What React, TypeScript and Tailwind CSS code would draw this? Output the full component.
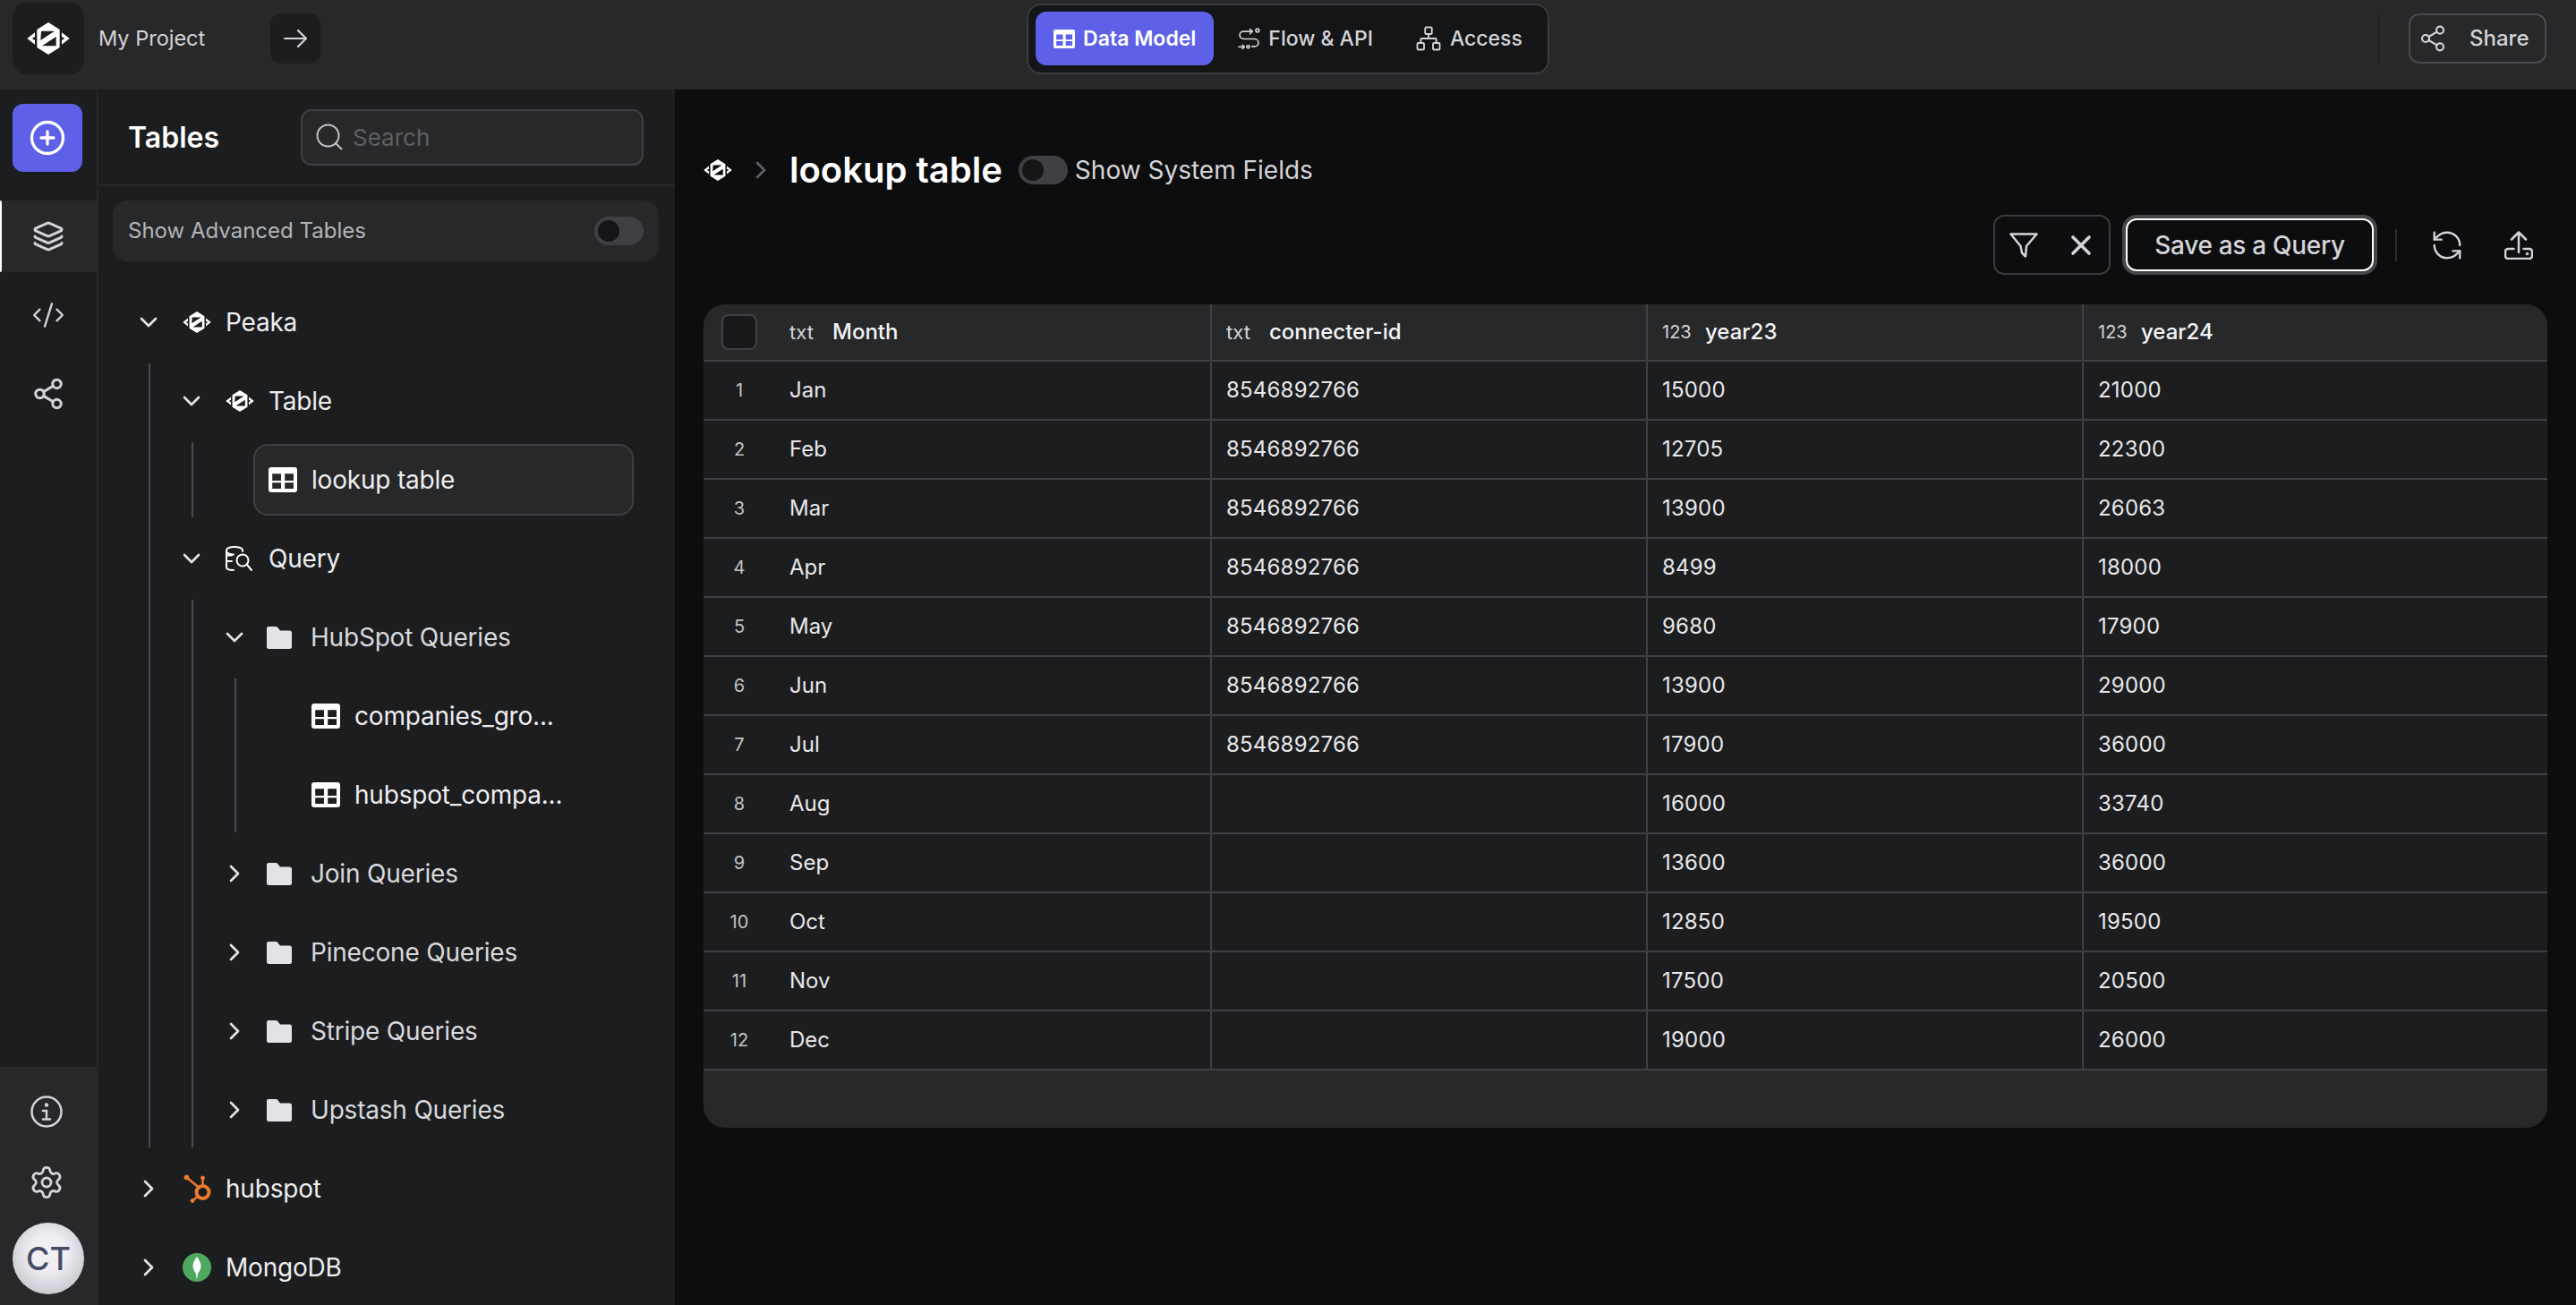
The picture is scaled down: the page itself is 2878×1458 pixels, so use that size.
import React from 'react';
import { ChevronDown, ChevronRight, CirclePlus, CodeXml, Layers, Network, RefreshCcw, Search, Settings, Share2, X } from 'lucide-react';

function PeakaLogo({ className }: { className?: string }) {
  return (
    <svg viewBox="0 0 142 108" className={className} fill="currentColor">
      <path
        fillRule="evenodd"
        d="M33 24 71 0l38 24v60l-38 24-38-24ZM47 29h45L45 60ZM97 48v31H50Z"
      />
      <path d="M0 54 26 34v14l-10 6 10 6v14ZM142 54l-26-20v14l10 6-10 6v14Z" />
    </svg>
  );
}

function TableIcon({ className }: { className?: string }) {
  return (
    <svg viewBox="0 0 32 28" className={className} fill="currentColor">
      <path
        fillRule="evenodd"
        d="M3 0h26a3 3 0 0 1 3 3v22a3 3 0 0 1-3 3H3a3 3 0 0 1-3-3V3a3 3 0 0 1 3-3ZM4.200 7.200V15H14V7.200ZM18.200 7.200V15H28V7.200ZM4.200 17.200V24H14v-6.800ZM18.200 17.200V24H28v-6.800Z"
      />
    </svg>
  );
}

function FolderIcon() {
  return (
    <svg viewBox="0 0 28 25" className="h-[25px] w-[28px] text-[#e2e3e7]" fill="currentColor">
      <path d="M2 0h8.500a2 2 0 0 1 1.500.7L15 4.500h10.500A2.500 2.500 0 0 1 28 7v15.500a2.500 2.500 0 0 1-2.500 2.500h-23A2.500 2.500 0 0 1 0 22.500V2a2 2 0 0 1 2-2Z" />
    </svg>
  );
}

function QueryIcon() {
  return (
    <svg viewBox="0 0 30 28" className="h-[28px] w-[30px] text-white" fill="none" stroke="currentColor" strokeWidth="2" strokeLinecap="round">
      <path d="M19 6V4.500C19 2.500 15 1 10 1S1 2.500 1 4.500v19C1 25.500 4 27 9 27" />
      <path d="M1 6c0 2 4 3.500 8 3.500M1 17h6M1 10.500h6" />
      <circle cx="19" cy="16" r="6.500" />
      <path d="m24 21 5 6" />
    </svg>
  );
}

function FlowIcon() {
  return (
    <svg viewBox="0 0 24 24" className="h-[25px] w-[25px] text-[#d4d4d8]" fill="none" stroke="currentColor" strokeWidth="1.600" strokeLinecap="round" strokeLinejoin="round">
      <circle cx="21" cy="2.800" r="1.800" />
      <path d="M15 4H6a4 4 0 0 0 0 8h12a4 4 0 0 1 0 8h-3" />
      <path d="m13 1.500 2.500 2.500L13 6.500" />
      <path d="M1 20.500h6M5 18.500l2 2-2 2" />
      <circle cx="11" cy="20.500" r="1.500" />
    </svg>
  );
}

function InfoIcon() {
  return (
    <svg viewBox="0 0 36 36" className="h-[36px] w-[36px] text-[#d4d4d8]" fill="none" stroke="currentColor" strokeWidth="2.500" strokeLinecap="round">
      <circle cx="18" cy="18" r="16.500" />
      <path d="M14 17h4v9M14 26.500h8" />
      <circle cx="18" cy="10.500" r="1" fill="currentColor" />
    </svg>
  );
}

function HubspotIcon() {
  return (
    <svg viewBox="0 0 32 32" className="h-[32px] w-[32px] text-[#ee7a30]" fill="currentColor" stroke="currentColor">
      <circle cx="22.500" cy="20" r="7" fill="none" strokeWidth="4" />
      <circle cx="4.500" cy="3.500" r="2.500" strokeWidth="1" />
      <circle cx="22.500" cy="4" r="2" strokeWidth="1" />
      <circle cx="11" cy="29.500" r="2" strokeWidth="1" />
      <path d="m4.500 3.500 14 11.500M22.500 4v10M11 29.500l6-5" fill="none" strokeWidth="2.500" />
    </svg>
  );
}

function MongoIcon() {
  return (
    <svg viewBox="0 0 32 32" className="h-[32px] w-[32px]">
      <circle cx="16" cy="16" r="16" fill="#4fa860" />
      <path d="M16 4c3 4 4.500 7.500 4.500 10.500S18.500 21 17 23l-.5 5h-1l-.5-5c-1.500-2-3.500-5.500-3.500-8.500S13 8 16 4Z" fill="#fff" />
    </svg>
  );
}

function ToggleOff() {
  return (
    <div className="flex h-[32px] w-[55px] shrink-0 items-center rounded-full bg-[#3f4043] pl-[4px]">
      <div className="h-[24px] w-[24px] rounded-full bg-[#141517]" />
    </div>
  );
}

interface TreeRowProps {
  open?: boolean;
  icon: React.ReactNode;
  label: string;
  gap?: string;
}

function TreeRow({ open, icon, label, gap = 'gap-[16px]' }: TreeRowProps) {
  return (
    <div className="flex h-[88px] items-center">
      <div className="flex w-[54px] shrink-0 text-[#e4e4e7]">
        {open ? <ChevronDown size={32} strokeWidth={2} /> : <ChevronRight size={32} strokeWidth={2} />}
      </div>
      <div className={`flex items-center ${gap}`}>
        {icon}
        <span className="text-[28px] leading-none tracking-[-0.2px] text-[#eeeef0]">{label}</span>
      </div>
    </div>
  );
}

function FolderRow({ open, label }: { open?: boolean; label: string }) {
  return (
    <div className="flex h-[88px] items-center">
      <div className="flex w-[52px] shrink-0 text-[#e4e4e7]">
        {open ? <ChevronDown size={32} strokeWidth={2} /> : <ChevronRight size={32} strokeWidth={2} />}
      </div>
      <div className="flex items-center gap-[21px]">
        <FolderIcon />
        <span className="text-[28px] leading-none tracking-[-0.2px] text-[#d8d9dc]">{label}</span>
      </div>
    </div>
  );
}

function Guide({ className, children }: { className: string; children: React.ReactNode }) {
  return (
    <div className={`my-[2px] flex flex-col border-l-2 border-[#4a4b4e] ${className}`}>
      <div className="-my-[2px]">{children}</div>
    </div>
  );
}

function QueryLeaf({ label }: { label: string }) {
  return (
    <div className="flex h-[88px] items-center gap-[16px] pl-[84px]">
      <TableIcon className="h-[28px] w-[32px] text-white" />
      <span className="text-[28px] leading-none tracking-[-0.2px] text-[#eeeef0]">{label}</span>
    </div>
  );
}

function Rail() {
  return (
    <div className="flex w-[110px] shrink-0 flex-col justify-between border-r-2 border-[#27282a] bg-[#1c1d1f]">
      <div>
        <div className="ml-[14px] mt-[16px] flex h-[76px] w-[78px] items-center justify-center rounded-xl bg-[#5e61e8] text-white">
          <CirclePlus size={42} strokeWidth={1.900} />
        </div>
        <div className="mt-[32px] flex flex-col gap-[8px]">
          <div className="relative flex h-[80px] items-center justify-center bg-[#27282a] text-[#d4d4d8]">
            <div className="absolute left-0 top-0 h-full w-[2px] rounded-r bg-white" />
            <Layers size={36} strokeWidth={2} />
          </div>
          <div className="flex h-[80px] items-center justify-center text-[#d4d4d8]">
            <CodeXml size={38} strokeWidth={1.500} />
          </div>
          <div className="flex h-[80px] items-center justify-center text-[#d4d4d8]">
            <Share2 size={38} strokeWidth={1.900} />
          </div>
        </div>
      </div>
      <div className="flex h-[266px] flex-col bg-[#27282a] pl-[14px]">
        <div className="ml-[20px] mt-[32px] h-[36px] w-[36px]">
          <InfoIcon />
        </div>
        <div className="ml-[18px] mt-[41px] text-[#d4d4d8]">
          <Settings size={40} strokeWidth={1.700} />
        </div>
        <div className="mt-[25px] flex h-[80px] w-[80px] items-center justify-center rounded-full bg-[radial-gradient(circle_at_50%_42%,#f0f0f4_30%,#b4b5c0_100%)] text-[36px] font-medium text-[#464a66]">
          CT
        </div>
      </div>
    </div>
  );
}

function Sidebar() {
  return (
    <div className="flex w-[644px] shrink-0 flex-col overflow-hidden bg-[#1c1d1f]">
      <div className="flex h-[108px] shrink-0 items-center justify-between border-b-2 border-[#27282a] pl-[33px] pr-[35px]">
        <span className="pt-[2px] text-[32px] font-semibold text-white">Tables</span>
        <div className="flex h-[63px] w-[383px] items-center gap-[8px] rounded-xl border-2 border-[#3f4043] bg-[#27282a] pl-[12px]">
          <Search size={36} strokeWidth={1.300} className="text-[#c4c4c8]" />
          <span className="pt-[1px] text-[26px] text-[#5f6064]">Search</span>
        </div>
      </div>
      <div className="ml-[16px] mr-[18px] mt-[16px] flex h-[68px] shrink-0 items-center justify-between rounded-2xl bg-[#27282a] pl-[17px] pr-[17px]">
        <span className="text-[24px] text-[#b4b5b8]">Show Advanced Tables</span>
        <ToggleOff />
      </div>
      <div className="mt-[24px] pl-[40px]">
        <TreeRow open icon={<PeakaLogo className="h-[24px] w-[32px] text-white" />} label="Peaka" />
        <Guide className="ml-[16px]">
          <div className="pl-[30px]">
            <TreeRow open icon={<PeakaLogo className="h-[24px] w-[32px] text-white" />} label="Table" />
            <Guide className="ml-[16px]">
              <div className="flex h-[88px] items-center pl-[67px]">
                <div className="flex h-[80px] w-[425px] items-center gap-[16px] rounded-2xl border-2 border-[#3f4043] bg-[#27282a] pl-[15px]">
                  <TableIcon className="h-[28px] w-[32px] text-white" />
                  <span className="text-[28px] leading-none tracking-[-0.2px] text-[#eeeef0]">lookup table</span>
                </div>
              </div>
            </Guide>
            <TreeRow open icon={<QueryIcon />} label="Query" gap="gap-[18px]" />
            <Guide className="ml-[16px]">
              <div className="pl-[30px]">
                <FolderRow open label="HubSpot Queries" />
                <Guide className="ml-[16px]">
                  <QueryLeaf label="companies_gro..." />
                  <QueryLeaf label="hubspot_compa..." />
                </Guide>
                <FolderRow label="Join Queries" />
                <FolderRow label="Pinecone Queries" />
                <FolderRow label="Stripe Queries" />
                <FolderRow label="Upstash Queries" />
              </div>
            </Guide>
          </div>
        </Guide>
        <TreeRow icon={<HubspotIcon />} label="hubspot" />
        <TreeRow icon={<MongoIcon />} label="MongoDB" />
      </div>
    </div>
  );
}

const rows: [string, string, string, string][] = [
  ['Jan', '8546892766', '15000', '21000'],
  ['Feb', '8546892766', '12705', '22300'],
  ['Mar', '8546892766', '13900', '26063'],
  ['Apr', '8546892766', '8499', '18000'],
  ['May', '8546892766', '9680', '17900'],
  ['Jun', '8546892766', '13900', '29000'],
  ['Jul', '8546892766', '17900', '36000'],
  ['Aug', '', '16000', '33740'],
  ['Sep', '', '13600', '36000'],
  ['Oct', '', '12850', '19500'],
  ['Nov', '', '17500', '20500'],
  ['Dec', '', '19000', '26000'],
];

function HeadCell({ type, label, last }: { type: string; label: string; last?: boolean }) {
  return (
    <div className={`flex items-center pl-[16px] ${last ? '' : 'border-r-2 border-[#3f4043]'}`}>
      <span className={`w-[48px] shrink-0 text-[#d4d4d8] ${type === 'txt' ? 'text-[22px]' : 'text-[20px]'}`}>{type}</span>
      <span className="text-[24px] font-medium text-[#f4f4f5]">{label}</span>
    </div>
  );
}

function DataTable() {
  const cell = 'flex items-center pl-[16px] text-[24px] text-[#e8e8ea]';
  return (
    <div className="mt-[33px] overflow-hidden rounded-3xl bg-[#27282a]">
      <div className="grid h-[64px] grid-cols-[80px_488px_487px_487px_1fr] border-b-2 border-[#3f4043]">
        <div className="flex items-center justify-center">
          <div className="h-[40px] w-[40px] rounded-lg border-2 border-[#3f4043] bg-[#17181a]" />
        </div>
        <HeadCell type="txt" label="Month" />
        <HeadCell type="txt" label="connecter-id" />
        <HeadCell type="123" label="year23" />
        <HeadCell type="123" label="year24" last />
      </div>
      {rows.map((row, i) => (
        <div key={row[0]} className="grid h-[66px] grid-cols-[80px_488px_487px_487px_1fr] border-b-2 border-[#3f4043] bg-[#1c1d1f]">
          <div className="flex items-center justify-center text-[20px] text-[#c4c4c8]">{i + 1}</div>
          <div className={`${cell} border-r-2 border-[#3f4043]`}>{row[0]}</div>
          <div className={`${cell} border-r-2 border-[#3f4043] tracking-[0.2px]`}>{row[1]}</div>
          <div className={`${cell} border-r-2 border-[#3f4043] tracking-[0.2px]`}>{row[2]}</div>
          <div className={`${cell} tracking-[0.2px]`}>{row[3]}</div>
        </div>
      ))}
      <div className="h-[64px]" />
    </div>
  );
}

function Main() {
  return (
    <div className="min-w-0 flex-1 bg-[#0c0d0e] px-[32px] pt-[66px]">
      <div className="flex h-[48px] items-center">
        <PeakaLogo className="h-[24px] w-[32px] text-white" />
        <ChevronRight size={32} strokeWidth={2} className="ml-[16px] text-[#5f6064]" />
        <h1 className="ml-[16px] text-[40px] font-semibold text-white">lookup table</h1>
        <div className="ml-[18px]">
          <ToggleOff />
        </div>
        <span className="ml-[8px] text-[28px] text-[#d4d4d8]">Show System Fields</span>
      </div>
      <div className="mt-[26px] flex h-[67px] items-center justify-end pr-[16px] text-[#d4d4d8]">
        <div className="flex h-[67px] w-[131px] items-center rounded-xl border-2 border-[#3a3b3e] pl-[16px]">
          <svg viewBox="0 0 32 28" className="h-[28px] w-[32px]" fill="none" stroke="currentColor" strokeWidth="2.500" strokeLinejoin="round">
            <path d="M1.500 1.500h29L19 15l-1 11.500-4-4L12.500 15Z" />
          </svg>
          <X size={36} strokeWidth={2.400} className="ml-[30px]" />
        </div>
        <button className="ml-[17px] mr-[4px] h-[59px] w-[277px] rounded-xl border-2 border-white text-[28px] font-medium tracking-[-0.3px] text-[#d4d4d8] ring-4 ring-[#45464a]">
          Save as a Query
        </button>
        <div className="ml-[20px] h-[36px] w-[2px] bg-[#2d2e30]" />
        <RefreshCcw size={38} strokeWidth={1.500} className="ml-[37px]" />
        <svg viewBox="0 0 32 32" className="ml-[45px] h-[32px] w-[32px]" fill="none" stroke="currentColor" strokeWidth="2.500" strokeLinecap="round" strokeLinejoin="round">
          <path d="M16 1.500V24M8 9.500l8-8 8 8" />
          <path d="M10.500 20H4a3 3 0 0 0-3 3v5a3 3 0 0 0 3 3h24a3 3 0 0 0 3-3v-5a3 3 0 0 0-3-3h-6.500" />
          <circle cx="25.500" cy="25.500" r=".6" fill="currentColor" />
        </svg>
      </div>
      <DataTable />
    </div>
  );
}

function TopBar() {
  return (
    <div className="flex h-[100px] shrink-0 items-center bg-[#27282a] pb-[14px]">
      <div className="flex flex-1 items-center pl-[14px] pr-[19px]">
        <div className="flex h-[80px] w-[80px] items-center justify-center rounded-2xl bg-[#1c1d1f]">
          <PeakaLogo className="h-[36px] w-[48px] text-white" />
        </div>
        <span className="ml-[16px] w-[192px] text-[23.500px] text-[#d4d4d8]">My Project</span>
        <div className="flex h-[56px] w-[56px] items-center justify-center rounded-xl bg-[#1c1d1f] text-[#d4d4d8]">
          <svg viewBox="0 0 26 20" className="h-[20px] w-[26px]" fill="none" stroke="currentColor" strokeWidth="2.200" strokeLinecap="round" strokeLinejoin="round">
            <path d="M1 10h24M16 1l9 9-9 9" />
          </svg>
        </div>
      </div>
      <div className="flex h-[79px] items-center gap-[7px] rounded-2xl border-2 border-[#3a3b3e] bg-[#141516] px-[8px] text-[23px] font-medium">
        <div className="flex h-[60px] items-center gap-[9px] rounded-xl bg-[#5e61e8] px-[20px] font-semibold text-white">
          <TableIcon className="h-[21px] w-[24px]" />
          Data Model
        </div>
        <div className="flex h-[60px] items-center gap-[9px] px-[20px] text-[#d4d4d8]">
          <FlowIcon />
          Flow &amp; API
        </div>
        <div className="flex h-[60px] items-center gap-[9px] px-[20px] text-[#d4d4d8]">
          <Network size={30} strokeWidth={1.500} />
          Access
        </div>
      </div>
      <div className="flex flex-1 items-center justify-end pr-[33px]">
        <div className="h-[56px] w-[2px] bg-[#1f2022]" />
        <div className="ml-[32px] flex h-[56px] w-[154px] items-center rounded-xl border-2 border-[#4a4b4e] pl-[9px] text-[24px] font-medium text-[#d4d4d8]">
          <Share2 size={32} strokeWidth={1.600} />
          <span className="ml-[25px]">Share</span>
        </div>
      </div>
    </div>
  );
}

export default function App() {
  return (
    <div className="flex h-screen flex-col overflow-hidden bg-[#0c0d0e] font-[Inter,sans-serif]">
      <TopBar />
      <div className="flex min-h-0 flex-1">
        <Rail />
        <Sidebar />
        <Main />
      </div>
    </div>
  );
}
